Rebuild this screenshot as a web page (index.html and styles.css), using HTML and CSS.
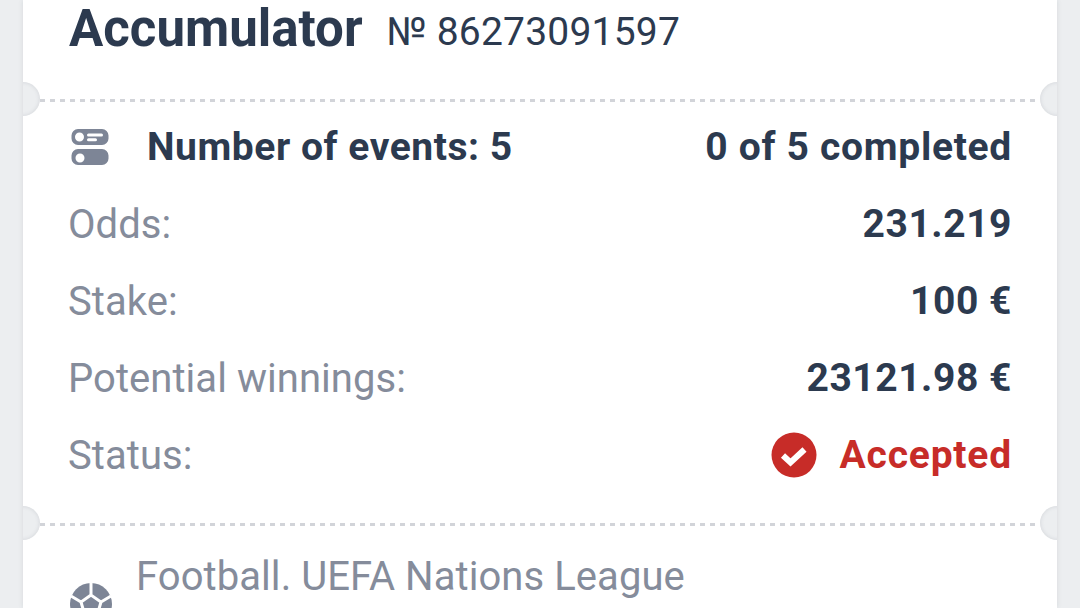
FILE: index.html
```html
<!DOCTYPE html>
<html lang="en">
<head>
<meta charset="utf-8">
<title>Accumulator</title>
<link rel="stylesheet" href="styles.css">
</head>
<body>
<main class="ticket">
  <header class="head">
    <h1 class="title">Accumulator</h1>
    <span class="number">№ 86273091597</span>
  </header>
  <section class="section summary">
    <span class="notch left"></span><span class="notch right"></span>
    <div class="row">
      <div class="events">
        <svg class="events-icon" viewBox="0 0 38 38" width="38" height="38" aria-hidden="true">
          <path fill="#7d8596" fill-rule="evenodd" d="M7 1h24a6.500 6.500 0 0 1 6.500 6.500v3a6.500 6.500 0 0 1-6.500 6.500H7a6.500 6.500 0 0 1-6.500-6.500v-3A6.500 6.500 0 0 1 7 1Zm1.500 3.500a4.500 4.500 0 1 0 0 9 4.500 4.500 0 0 0 0-9Zm9 1a1.500 1.500 0 0 0 0 3h13a1.500 1.500 0 0 0 0-3Zm0 4.800a1.500 1.500 0 0 0 0 3h7a1.500 1.500 0 0 0 0-3Z"/>
          <path fill="#7d8596" fill-rule="evenodd" d="M7 21h24a6.500 6.500 0 0 1 6.500 6.500v3a6.500 6.500 0 0 1-6.500 6.500H7a6.500 6.500 0 0 1-6.500-6.500v-3A6.500 6.500 0 0 1 7 21Zm2 4.500a4.500 4.500 0 1 0 0 9 4.500 4.500 0 0 0 0-9Z"/>
        </svg>
        <span class="strong">Number of events: 5</span>
      </div>
      <span class="strong progress">0 of 5 completed</span>
    </div>
    <div class="row"><span class="label">Odds:</span><span class="strong">231.219</span></div>
    <div class="row"><span class="label">Stake:</span><span class="strong">100 €</span></div>
    <div class="row"><span class="label">Potential winnings:</span><span class="strong">23121.98 €</span></div>
    <div class="row">
      <span class="label">Status:</span>
      <span class="status">
        <svg viewBox="0 0 46 46" width="46" height="46" aria-hidden="true">
          <circle cx="23" cy="23" r="22.500" fill="#c72c28"/>
          <path d="M12 23.500l7.500 7 14-13" fill="none" stroke="#fff" stroke-width="6" stroke-linejoin="miter"/>
        </svg>
        <span class="strong accepted">Accepted</span>
      </span>
    </div>
  </section>
  <section class="section match">
    <span class="notch left"></span><span class="notch right"></span>
    <svg class="ball" viewBox="0 0 42 42" width="42" height="42" aria-hidden="true">
      <circle cx="21" cy="21" r="21" fill="#7d8596"/>
      <path d="M21 12l-10 7 3.500 12h13L31 19Zm0 0V0M11 19L1 13M31 19l10-6M14.500 31L8 41M27.500 31L34 41" fill="none" stroke="#fff" stroke-width="3"/>
    </svg>
    <span class="league">Football. UEFA Nations League</span>
  </section>
</main>
</body>
</html>
```
FILE: styles.css
```css
* { box-sizing: border-box; }
html, body { margin: 0; height: 608px; overflow: hidden; }
body {
  background: #eceef0;
  font-family: Roboto, "Liberation Sans", sans-serif;
  padding: 0 23px;
}
.ticket {
  background: #fff;
  height: 608px;
  overflow: hidden;
  box-shadow: 0 0 5px rgba(60, 70, 85, .12);
  position: relative;
}
.head {
  height: 99px;
  padding: 0 46px 41px;
  display: flex;
  align-items: center;
  gap: 24px;
  color: #2c3a4f;
}
.title { margin: 0; font-size: 51px; line-height: 58px; font-weight: 700; white-space: nowrap; }
.number { font-size: 39px; letter-spacing: .2px; line-height: 44px; padding-top: 6px; white-space: nowrap; }
.section {
  position: relative;
  background: repeating-linear-gradient(90deg, #d2d4d9 0 5px, transparent 5px 10px) 17px 0 / calc(100% - 34px) 3px no-repeat;
}
.summary { height: 424px; padding: 9px 45px 0; }
.row {
  height: 77px;
  display: flex;
  align-items: center;
  justify-content: space-between;
  font-size: 40px;
  white-space: nowrap;
}
.events { display: flex; align-items: center; gap: 38px; padding-left: 3px; }
.events-icon { display: block; }
.strong { color: #2c3a4f; font-weight: 700; font-size: 39px; letter-spacing: .55px; }
.progress { letter-spacing: .7px; }
.label { color: #858c9b; padding-top: 2px; letter-spacing: .05px; }
.status { display: flex; align-items: center; gap: 23px; }
.status svg { display: block; }
.accepted { color: #c72c28; letter-spacing: .8px; }
.notch {
  position: absolute;
  top: -17px;
  width: 34px;
  height: 34px;
  border-radius: 50%;
  background: #eceef0;
  box-shadow: inset 0 0 4px rgba(60, 70, 85, .15);
}
.notch.left { left: -17px; }
.notch.right { right: -17px; }
.match {
  display: flex;
  align-items: flex-start;
  gap: 24px;
  padding: 33px 46px 0 47px;
}
.ball { margin-top: 27px; flex: none; }
.league { color: #858c9b; font-size: 40px; line-height: 42px; letter-spacing: .07px; white-space: nowrap; }
```
